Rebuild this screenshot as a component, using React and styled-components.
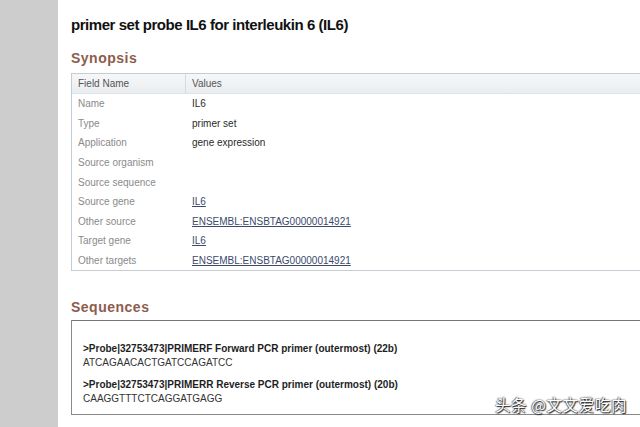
import styled, { createGlobalStyle } from "styled-components";

const Global = createGlobalStyle`
  html, body {
    margin: 0;
    padding: 0;
    background: #ffffff;
    overflow: hidden;
  }
  body {
    font-family: "Liberation Sans", Arial, sans-serif;
  }
`;

const fields = [
  { name: "Name", value: "IL6" },
  { name: "Type", value: "primer set" },
  { name: "Application", value: "gene expression" },
  { name: "Source organism" },
  { name: "Source sequence" },
  { name: "Source gene", value: "IL6", link: true },
  { name: "Other source", value: "ENSEMBL:ENSBTAG00000014921", link: true },
  { name: "Target gene", value: "IL6", link: true },
  { name: "Other targets", value: "ENSEMBL:ENSBTAG00000014921", link: true },
];

const primers = [
  {
    header: ">Probe|32753473|PRIMERF Forward PCR primer (outermost) (22b)",
    seq: "ATCAGAACACTGATCCAGATCC",
  },
  {
    header: ">Probe|32753473|PRIMERR Reverse PCR primer (outermost) (20b)",
    seq: "CAAGGTTTCTCAGGATGAGG",
  },
];

export default function App() {
  return (
    <>
      <Global />
      <Page>
        <Sidebar />
        <Main>
          <Title>primer set probe IL6 for interleukin 6 (IL6)</Title>
          <Heading>Synopsis</Heading>
          <Table>
            <HeadRow>
              <HeadCell>Field Name</HeadCell>
              <HeadCell divided>Values</HeadCell>
            </HeadRow>
            {fields.map((f) => (
              <Row key={f.name}>
                <FieldCell>{f.name}</FieldCell>
                <ValueCell>
                  {f.link ? <Link>{f.value}</Link> : f.value}
                </ValueCell>
              </Row>
            ))}
          </Table>
          <Heading spaced>Sequences</Heading>
          <SeqBox>
            {primers.map((p) => (
              <Primer key={p.header}>
                <PrimerHead>{p.header}</PrimerHead>
                <PrimerSeq>{p.seq}</PrimerSeq>
              </Primer>
            ))}
          </SeqBox>
        </Main>
        <Watermark>头条 @文文爱吃肉</Watermark>
      </Page>
    </>
  );
}

const Page = styled.div`
  position: relative;
  display: flex;
  width: 640px;
  height: 427px;
  overflow: hidden;
`;

const Sidebar = styled.div`
  flex: 0 0 58px;
  background: #cdcdcd;
`;

const Main = styled.div`
  flex: 1;
  padding: 16px 0 0 13px;
  min-width: 0;
`;

const Title = styled.h1`
  margin: 0;
  font-size: 15px;
  line-height: 18px;
  letter-spacing: -0.45px;
  font-weight: bold;
  color: #111;
  white-space: nowrap;
`;

const Heading = styled.h2`
  margin: ${({ spaced }) => (spaced ? "28px 0 0" : "16px 0 0")};
  font-size: 14px;
  line-height: 16px;
  letter-spacing: 0.5px;
  font-weight: bold;
  color: #8d5c4c;
`;

const Table = styled.div`
  margin-top: 7px;
  width: 600px;
  border: 1px solid #c5ccd3;
  font-size: 10px;
`;

const HeadRow = styled.div`
  display: grid;
  grid-template-columns: 113px 1fr;
  height: 19px;
  background: linear-gradient(#f6f7f8, #eaedf0);
  border-bottom: 1px solid #dde2e6;
`;

const HeadCell = styled.div`
  display: flex;
  align-items: center;
  padding-left: 6px;
  border-left: ${({ divided }) => (divided ? "1px solid #d6dade" : "none")};
  color: #555;
`;

const Row = styled.div`
  display: grid;
  grid-template-columns: 113px 1fr;
  height: 19.6px;
  align-items: center;
`;

const FieldCell = styled.div`
  padding-left: 6px;
  color: #8a8a8a;
`;

const ValueCell = styled.div`
  padding-left: 7px;
  color: #2a2a2a;
`;

const Link = styled.span`
  color: #3b4a6b;
  text-decoration: underline;
`;

const SeqBox = styled.div`
  margin-top: 5px;
  width: 600px;
  height: 72px;
  padding: 21px 0 0 11px;
  border: 1px solid #8a8a8a;
  border-top-color: #777;
  display: flex;
  flex-direction: column;
  gap: 9px;
  font-size: 10px;
`;

const Primer = styled.div`
  display: flex;
  flex-direction: column;
`;

const PrimerHead = styled.div`
  font-weight: bold;
  line-height: 14px;
  color: #1e1e1e;
  white-space: nowrap;
`;

const PrimerSeq = styled.div`
  line-height: 13px;
  color: #333;
`;

const Watermark = styled.div`
  position: absolute;
  right: 13px;
  top: 395px;
  font-family: "Noto Sans CJK SC", sans-serif;
  font-size: 15.5px;
  line-height: 18px;
  color: #ffffff;
  letter-spacing: 0.6px;
  text-shadow: 1px 1px 1px #222, -0.5px -0.5px 1px #444, 0 0 2px #555;
`;
